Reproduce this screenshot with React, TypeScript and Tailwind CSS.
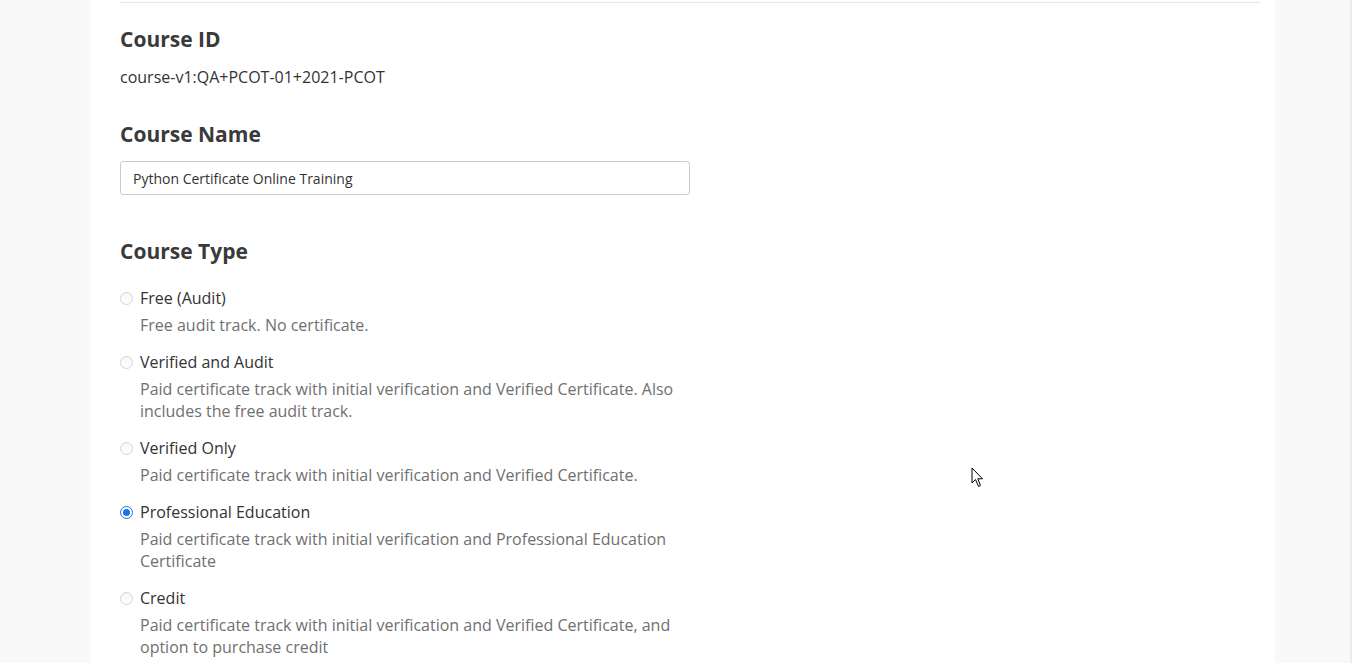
import React, { useState } from "react";

const courseTypes = [
  {
    id: "audit",
    label: "Free (Audit)",
    description: "Free audit track. No certificate.",
  },
  {
    id: "verified-audit",
    label: "Verified and Audit",
    description:
      "Paid certificate track with initial verification and Verified Certificate. Also includes the free audit track.",
  },
  {
    id: "verified",
    label: "Verified Only",
    description: "Paid certificate track with initial verification and Verified Certificate.",
  },
  {
    id: "professional",
    label: "Professional Education",
    description:
      "Paid certificate track with initial verification and Professional Education Certificate",
  },
  {
    id: "credit",
    label: "Credit",
    description:
      "Paid certificate track with initial verification and Verified Certificate, and option to purchase credit",
  },
];

function Radio({ checked }: { checked: boolean }) {
  if (checked) {
    return (
      <span className="flex h-[13px] w-[13px] shrink-0 items-center justify-center rounded-full border-[1.5px] border-[#1a73e8] bg-white">
        <span className="h-[7px] w-[7px] rounded-full bg-[#1a73e8]" />
      </span>
    );
  }
  return (
    <span className="h-[13px] w-[13px] shrink-0 rounded-full border border-[#d4d4d4] bg-gradient-to-b from-[#f6f6f6] to-[#ffffff]" />
  );
}

export default function App() {
  const [courseType, setCourseType] = useState("professional");
  const [courseName, setCourseName] = useState("Python Certificate Online Training");

  return (
    <div className="relative h-[663px] overflow-hidden bg-[#f9f9f9] font-['Open_Sans',sans-serif] text-[#333333]">
      <div className="ml-[90px] h-full w-[1185px] bg-white px-[30px] pt-[2px]">
        <div className="w-[1140px] border-t border-[#e7e7e7]" />

        {/* Course ID */}
        <h3 className="mt-[22px] text-[21px] font-bold leading-[28px] text-[#3a3a3a]">Course ID</h3>
        <p className="mt-[13px] text-[16px] leading-[22px]">course-v1:QA+PCOT-01+2021-PCOT</p>

        {/* Course Name */}
        <h3 className="mt-[32px] text-[21px] font-bold leading-[28px] text-[#3a3a3a]">Course Name</h3>
        <input
          type="text"
          value={courseName}
          onChange={(e) => setCourseName(e.target.value)}
          className="mt-[13px] block h-[34px] w-[570px] rounded-[3px] border border-[#cccccc] px-[12px] text-[14px] text-[#333333] focus:outline-none"
        />

        {/* Course Type */}
        <h3 className="mt-[42px] text-[21px] font-bold leading-[28px] text-[#3a3a3a]">Course Type</h3>
        <div className="mt-[22px] flex w-[570px] flex-col gap-[15px]">
          {courseTypes.map((type) => (
            <div key={type.id} className="cursor-pointer" onClick={() => setCourseType(type.id)}>
              <div className="flex h-[22px] items-center gap-[7px]">
                <Radio checked={courseType === type.id} />
                <span className="text-[16px] leading-[22px] text-[#333333]">{type.label}</span>
              </div>
              <p className="mt-[5px] pl-[20px] text-[16px] leading-[22px] text-[#707070]">
                {type.description}
              </p>
            </div>
          ))}
        </div>
      </div>

      {/* scrollbar edge */}
      <div className="absolute right-0 top-0 h-full w-[2px] bg-[#ececec]" />

      {/* mouse cursor */}
      <svg className="absolute left-[971px] top-[467px]" width="14" height="21" viewBox="0 0 14 21">
        <path
          d="M1 1 L1 16 L4.5 12.5 L7.5 19.5 L9.5 18.5 L6.8 11.8 L11.5 11.8 Z"
          fill="#ffffff"
          stroke="#000000"
          strokeWidth="1"
          strokeLinejoin="round"
        />
      </svg>
    </div>
  );
}
